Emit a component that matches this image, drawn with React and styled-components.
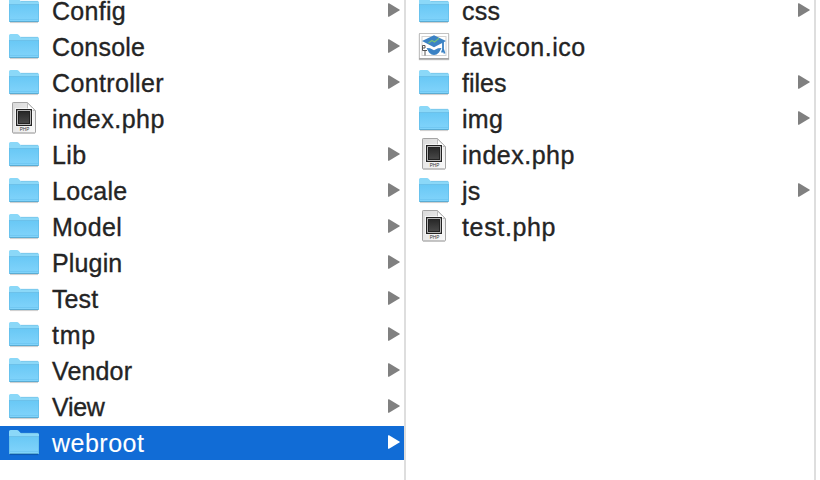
import React from "react";
import styled, { createGlobalStyle } from "styled-components";

const GlobalStyle = createGlobalStyle`
  body { margin: 0; background: #fff; overflow: hidden; }
`;

const Browser = styled.main`
  display: flex;
  width: 820px;
  height: 480px;
  overflow: hidden;
  background: #fff;
  font-family: "Liberation Sans", Arial, sans-serif;
`;

const Column = styled.ul`
  box-sizing: border-box;
  flex: none;
  width: ${(p) => p.$width}px;
  height: 486px;
  margin: -6px 0 0;
  padding: 0;
  list-style: none;
  border-right: 2px solid #dedede;
`;

const Row = styled.li`
  box-sizing: border-box;
  display: flex;
  align-items: flex-start;
  height: 34px;
  margin-bottom: 2px;
  padding: 0 4px 0 ${(p) => p.$inset}px;
  background: ${(p) => (p.$selected ? "#116cd6" : "transparent")};
  color: ${(p) => (p.$selected ? "#fff" : "#242424")};
`;

const Icon = styled.svg`
  flex: none;
  display: block;
  width: 34px;
  height: 34px;
  margin-right: 11px;
`;

const Name = styled.span`
  flex: 1;
  padding-top: 6px;
  font-size: 25px;
  line-height: 22px;
  letter-spacing: ${(p) => p.$tracking}px;
  -webkit-text-stroke: ${(p) => (p.$selected ? 0.1 : 0.35)}px currentColor;
  white-space: nowrap;
`;

const Arrow = styled.svg`
  flex: none;
  display: block;
  width: 12px;
  height: 14px;
  margin-top: 9px;
  fill: ${(p) => (p.$selected ? "#fff" : "#808080")};
`;

function Folder() {
  return (
    <Icon viewBox="0 0 34 34">
      <path d="M3 28.6H31" stroke="#000" strokeOpacity=".2" />
      <path d="M2 5.5Q2 4 3.5 4H10q1 0 1.6.8l1.6 1.7q.4.5 1.4.5H30.5Q32 7 32 8.5V27q0 1-1 1H3q-1 0-1-1Z" fill="#8bd8f8" />
      <path d="M2 10.5H32V27q0 1-1 1H3q-1 0-1-1Z" fill="url(#folderFace)" />
      <path d="M2 10.5H32" stroke="#6cc1ea" />
      <path d="M14 7.3H31" stroke="#6fbde2" strokeWidth=".6" />
      <path d="M2.5 10V27M31.5 10V27" stroke="#61bce8" strokeOpacity=".65" />
      <path d="M3 25.5H31" stroke="#68c1ee" strokeOpacity=".6" />
      <path d="M2.5 27.5H31.5" stroke="#5aacd3" />
    </Icon>
  );
}

function PhpFile() {
  return (
    <Icon viewBox="0 0 34 34">
      <path d="M6 31.4H28" stroke="#000" strokeOpacity=".16" />
      <path d="M5.5 1.2Q5.5.5 6.2.5H20.5L28.5 8.5V30.2Q28.5 30.9 27.8 30.9H6.2Q5.5 30.9 5.5 30.2Z" fill="url(#paper)" stroke="#a4a4a4" />
      <path d="M20.5 1V8.5H28Z" fill="#fff" stroke="#bdbdbd" />
      <path d="M8 6H26V24.5H8Z" fill="#fff" fillOpacity=".65" />
      <path d="M9 7H25V24H9Z" fill="#222" />
      <path d="M10.5 8.5H23.5V22.5H10.5Z" fill="none" stroke="#b5b5b5" />
      <path d="M12 10H22V21H12Z" fill="url(#chip)" />
      <text x="17.5" y="29" textAnchor="middle" fontSize="5" fontFamily="Liberation Sans" fill="#333" textLength="9.5" lengthAdjust="spacingAndGlyphs">PHP</text>
    </Icon>
  );
}

function Favicon() {
  return (
    <Icon viewBox="0 0 34 34">
      <rect x="1.5" y="3.5" width="31" height="27" rx="1" fill="#000" fillOpacity=".1" />
      <rect x="2.5" y="3.5" width="29" height="25" fill="#fff" stroke="#c2c2c2" />
      <path d="M2 29H32" stroke="#888" />
      <rect x="5" y="6.5" width="24" height="19" fill="#fff" stroke="#d2d2d2" />
      <path d="M17 5.2L29 11 17 17.2 5 11Z" fill="#3b82c4" />
      <path d="M9.5 18L13 18.2 17 20.2 21 18.2 24.5 18 22 22.5Q17 27.5 12 22.5Z" fill="#3b82c4" />
      <path d="M26 12V19.5L24.8 22.5M26 19L27.6 23.5" fill="none" stroke="#3b82c4" strokeWidth="1.8" />
      <path d="M11.5 13L15 10.5 17.5 12 22 8.2" fill="none" stroke="#72c178" strokeWidth="1.2" />
      <path d="M5.5 20.5V15.5H8V18H5.5M5.5 20.5H10M8 20.5V25.5" fill="none" stroke="#555" strokeWidth="1" />
    </Icon>
  );
}

const icons = { folder: Folder, php: PhpFile, ico: Favicon };

const appEntries = [
  { name: "Config", kind: "folder", tracking: 0.3 },
  { name: "Console", kind: "folder", tracking: 0.2 },
  { name: "Controller", kind: "folder", tracking: 0.35 },
  { name: "index.php", kind: "php", tracking: 0.5 },
  { name: "Lib", kind: "folder", tracking: 0.4 },
  { name: "Locale", kind: "folder", tracking: 0.3 },
  { name: "Model", kind: "folder", tracking: 0.45 },
  { name: "Plugin", kind: "folder", tracking: 0.15 },
  { name: "Test", kind: "folder", tracking: 0.1 },
  { name: "tmp", kind: "folder", tracking: 0.7 },
  { name: "Vendor", kind: "folder", tracking: 0.15 },
  { name: "View", kind: "folder", tracking: -0.3 },
  { name: "webroot", kind: "folder", tracking: 0.5, selected: true },
];

const webrootEntries = [
  { name: "css", kind: "folder", tracking: 0.3 },
  { name: "favicon.ico", kind: "ico", tracking: 0.5 },
  { name: "files", kind: "folder", tracking: 0 },
  { name: "img", kind: "folder", tracking: 0.3 },
  { name: "index.php", kind: "php", tracking: 0.5 },
  { name: "js", kind: "folder", tracking: 0.3 },
  { name: "test.php", kind: "php", tracking: 0.65 },
];

function Entry({ name, kind, tracking, selected, inset }) {
  const Glyph = icons[kind];
  return (
    <Row $selected={selected} $inset={inset}>
      <Glyph />
      <Name $tracking={tracking} $selected={selected}>{name}</Name>
      {kind === "folder" && (
        <Arrow $selected={selected} viewBox="0 0 12 14">
          <path d="M0 .8Q0-.2 1 .3L11.4 6.4Q12.3 7 11.4 7.6L1 13.7Q0 14.2 0 13.2Z" />
        </Arrow>
      )}
    </Row>
  );
}

const Gradients = styled.svg`
  position: absolute;
  width: 0;
  height: 0;
`;

export default function App() {
  return (
    <>
      <GlobalStyle />
      <Gradients>
        <defs>
          <linearGradient id="folderFace" x1="0" y1="0" x2="0" y2="1">
            <stop offset="0" stopColor="#69c8f5" />
            <stop offset="1" stopColor="#82d4fb" />
          </linearGradient>
          <linearGradient id="paper" x1="0" y1="0" x2="1" y2="1">
            <stop offset="0" stopColor="#d9d9d9" />
            <stop offset="1" stopColor="#fafafa" />
          </linearGradient>
          <linearGradient id="chip" x1="0" y1="0" x2="0" y2="1">
            <stop offset="0" stopColor="#292929" />
            <stop offset="1" stopColor="#484848" />
          </linearGradient>
        </defs>
      </Gradients>
      <Browser>
        <Column $width={406}>
          {appEntries.map((e) => <Entry key={e.name} {...e} inset={7} />)}
        </Column>
        <Column $width={410}>
          {webrootEntries.map((e) => <Entry key={e.name} {...e} inset={11} />)}
        </Column>
      </Browser>
    </>
  );
}
